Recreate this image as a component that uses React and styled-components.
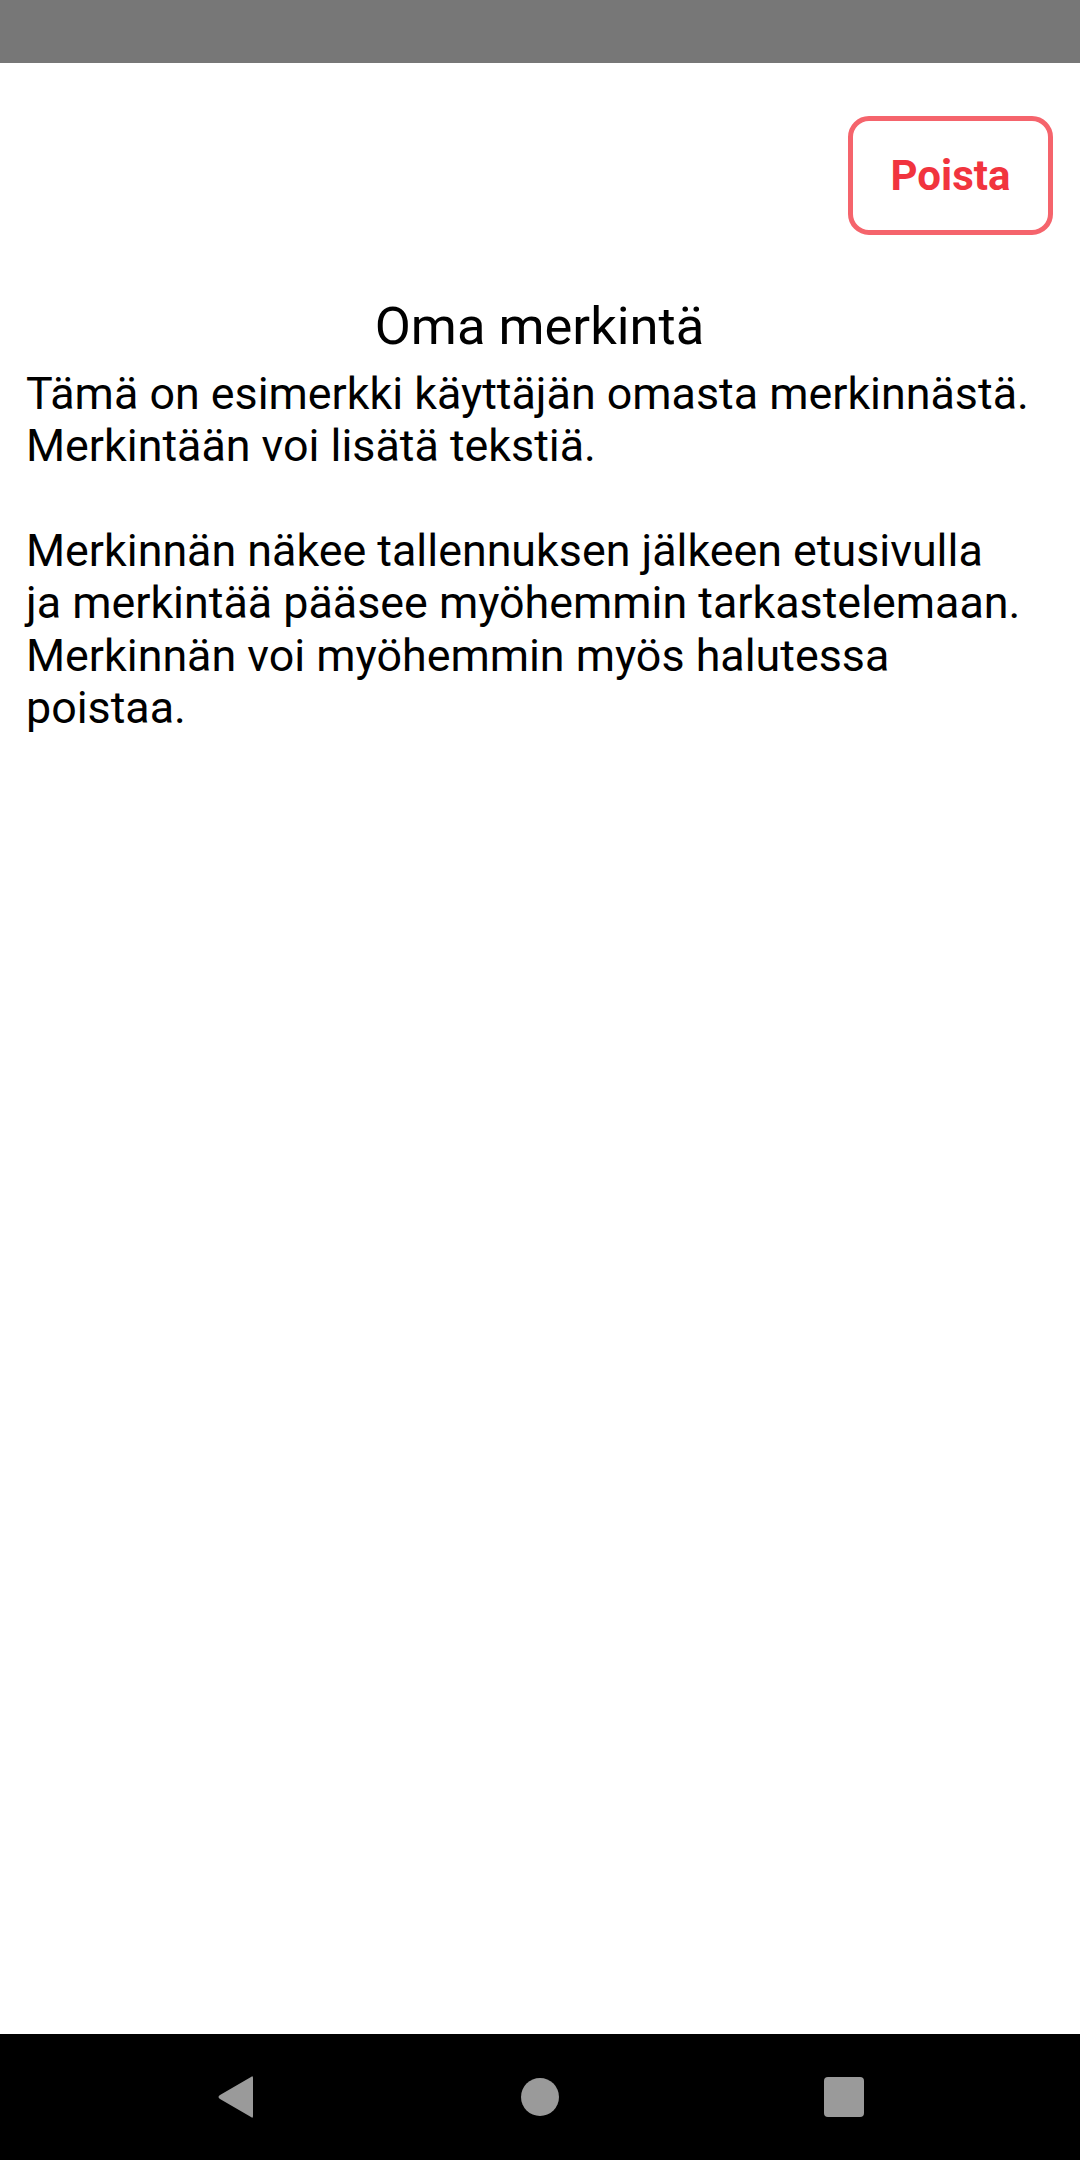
import React from 'react';
import styled, { createGlobalStyle } from 'styled-components';

const GlobalStyle = createGlobalStyle`
  html, body {
    margin: 0;
    padding: 0;
    background: #ffffff;
  }
  body {
    font-family: Roboto, "Noto Sans", "Liberation Sans", sans-serif;
  }
`;

const Screen = styled.div`
  width: 1080px;
  height: 2160px;
  display: flex;
  flex-direction: column;
  background: #ffffff;
`;

const StatusBar = styled.div`
  height: 63px;
  flex-shrink: 0;
  background: #777777;
`;

const Content = styled.main`
  flex: 1;
  display: flex;
  flex-direction: column;
  padding: 0 27px 0 26px;
`;

const Toolbar = styled.div`
  display: flex;
  justify-content: flex-end;
  padding-top: 53px;
`;

const DeleteButton = styled.button`
  box-sizing: border-box;
  width: 205px;
  height: 119px;
  border: 5px solid #f5646c;
  border-radius: 21px;
  background: #ffffff;
  color: #f1343e;
  font-family: Roboto, "Noto Sans", sans-serif;
  font-weight: 700;
  font-size: 42px;
  line-height: 1;
  padding: 0;
  cursor: pointer;
`;

const Title = styled.h1`
  margin: 61px 0 0;
  font-size: 52.5px;
  font-weight: 400;
  line-height: 61.5px;
  color: #000000;
  text-align: center;
`;

const Body = styled.p`
  margin: 10px 0 0;
  font-size: 44.8px;
  line-height: 52.4px;
  color: #000000;
  white-space: pre-wrap;
`;

const NavBar = styled.nav`
  height: 126px;
  flex-shrink: 0;
  background: #000000;
  display: flex;
  align-items: center;
  justify-content: center;
  gap: 262px;
`;

const NavSlot = styled.div`
  width: 42px;
  height: 42px;
  display: flex;
  align-items: center;
  justify-content: center;
`;

const HomeDot = styled.div`
  width: 38px;
  height: 38px;
  border-radius: 50%;
  background: #9a9a9a;
`;

const RecentsSquare = styled.div`
  width: 40px;
  height: 40px;
  border-radius: 4px;
  background: #9a9a9a;
`;

const BackIcon = () => (
  <svg width="40" height="44" viewBox="0 0 40 44">
    <path
      d="M37 3 L37 41 Q37 44 35 42 L4 24 Q1 22 4 20 L35 2 Q37 0 37 3 Z"
      fill="#9a9a9a"
    />
  </svg>
);

// the note wraps "ja" onto its own line on the device
const noteText = `Tämä on esimerkki käyttäjän omasta merkinnästä.
Merkintään voi lisätä tekstiä.

Merkinnän näkee tallennuksen jälkeen etusivulla
ja merkintää pääsee myöhemmin tarkastelemaan.
Merkinnän voi myöhemmin myös halutessa poistaa.`;

const App = () => {
  return (
    <>
      <GlobalStyle />
      <Screen>
        <StatusBar />
        <Content>
          <Toolbar>
            <DeleteButton>Poista</DeleteButton>
          </Toolbar>
          <Title>Oma merkintä</Title>
          <Body>{noteText}</Body>
        </Content>
        <NavBar>
          <NavSlot><BackIcon /></NavSlot>
          <NavSlot><HomeDot /></NavSlot>
          <NavSlot><RecentsSquare /></NavSlot>
        </NavBar>
      </Screen>
    </>
  );
};

export default App;
